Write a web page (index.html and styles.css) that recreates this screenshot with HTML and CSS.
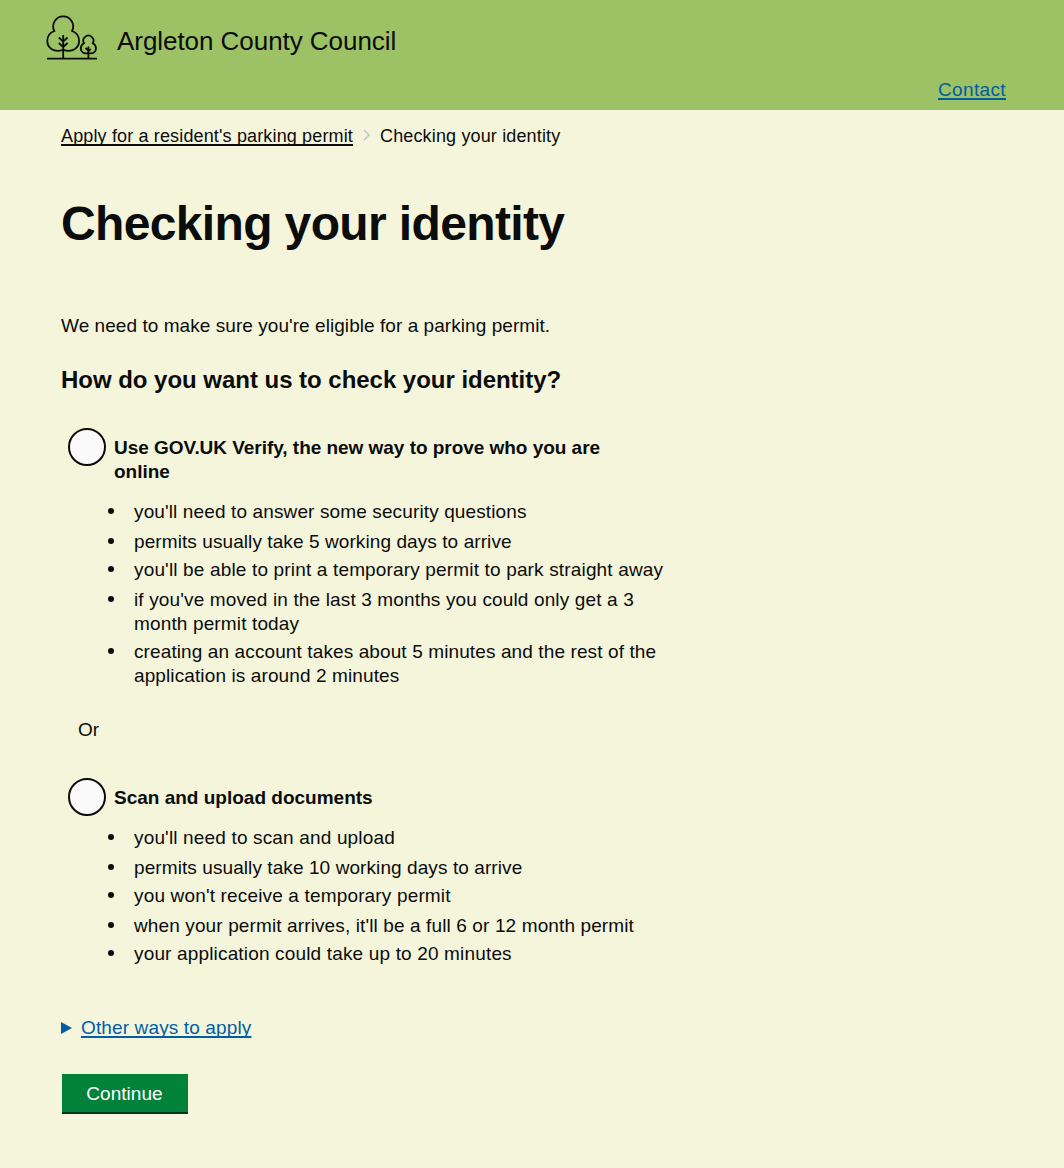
FILE: index.html
```html
<!DOCTYPE html>
<html lang="en">
<head>
<meta charset="utf-8">
<title>Checking your identity</title>
<link rel="stylesheet" href="styles.css">
</head>
<body>
<header class="header">
  <div class="brand">
    <svg class="logo" width="52" height="46" viewBox="0 0 52 46" fill="none" stroke="#0b0c0c" stroke-width="1.8" aria-hidden="true">
      <path d="M1 43.700H51M17.200 43.700V20M12.800 22.500L17.200 26.500L21.600 22.500M12.800 28L17.200 32L21.600 28"/>
      <path d="M17.200 34.800C8 38 1.300 33 1.300 26C1.300 21 4 17.500 8.300 16A10 10 0 1 1 26.100 16C30.400 17.500 33.100 21 33.100 26C33.100 33 26.400 38 17.200 34.800Z"/>
      <path d="M42.400 43.700V31.500M39.500 33L42.400 35.500M42.400 36.500L44.800 34"/>
      <path d="M42.400 37.800C38 39.500 34.800 37 34.800 33.500C34.800 31 36.200 29.200 38 28.300A5.100 5.100 0 1 1 46.800 28.300C48.600 29.200 50 31 50 33.500C50 37 46.800 39.500 42.400 37.800Z"/>
    </svg>
    <span class="brand-name">Argleton County Council</span>
  </div>
  <nav class="nav"><a class="link contact" href="#">Contact</a></nav>
</header>
<main class="main">
  <nav class="crumbs">
    <a class="crumb-link" href="#">Apply for a resident's parking permit</a>
    <svg class="chevron" width="7" height="12" viewBox="0 0 7 12" fill="none" stroke="#bfc1c3" stroke-width="1.400" aria-hidden="true"><path d="M1 1L6 6L1 11"/></svg>
    <span>Checking your identity</span>
  </nav>
  <h1 class="title">Checking your identity</h1>
  <p class="intro">We need to make sure you're eligible for a parking permit.</p>
  <h2 class="question">How do you want us to check your identity?</h2>
  <section class="option">
    <label class="choice"><input class="radio" type="radio" name="method"><span class="choice-text">Use GOV.UK Verify, the new way to prove who you are<br>online</span></label>
    <ul class="facts facts-verify">
      <li>you'll need to answer some security questions</li>
      <li>permits usually take 5 working days to arrive</li>
      <li>you'll be able to print a temporary permit to park straight away</li>
      <li>if you've moved in the last 3 months you could only get a 3<br>month permit today</li>
      <li>creating an account takes about 5 minutes and the rest of the<br>application is around 2 minutes</li>
    </ul>
  </section>
  <p class="or">Or</p>
  <section class="option">
    <label class="choice"><input class="radio" type="radio" name="method"><span class="choice-text choice-scan">Scan and upload documents</span></label>
    <ul class="facts">
      <li>you'll need to scan and upload</li>
      <li>permits usually take 10 working days to arrive</li>
      <li>you won't receive a temporary permit</li>
      <li>when your permit arrives, it'll be a full 6 or 12 month permit</li>
      <li>your application could take up to 20 minutes</li>
    </ul>
  </section>
  <div class="other"><svg width="11" height="12" viewBox="0 0 11 12" fill="#005ea5" aria-hidden="true"><path d="M0 0L11 6L0 12Z"/></svg><a class="link other-link" href="#">Other ways to apply</a></div>
  <button class="continue" type="button">Continue</button>
</main>
</body>
</html>
```
FILE: styles.css
```css
* { box-sizing: border-box; }
body {
  margin: 0;
  min-height: 1168px;
  background: #f5f5dc;
  color: #0b0c0c;
  font: 19px/24px "Liberation Sans", Arial, sans-serif;
}
h1, h2, p, ul { margin: 0; padding: 0; }
.header { height: 110px; padding: 15px 58px 0 46px; background: #9dc165; }
.brand { display: flex; gap: 19px; height: 63px; }
.logo { flex: none; }
.brand-name { font-size: 26px; line-height: 52px; letter-spacing: -0.05px; }
.nav { display: flex; justify-content: flex-end; }
.link, .crumb-link {
  color: #005ea5;
  text-decoration: underline 2px;
  text-underline-offset: 2px;
  text-decoration-skip-ink: none;
}
.contact { letter-spacing: 0.36px; }
.main { padding: 14px 61px 0; }
.crumbs { display: flex; align-items: center; height: 24px; font-size: 18px; letter-spacing: 0.147px; }
.crumb-link { color: inherit; }
.chevron { margin: 0 10px 2px; }
.title { margin-top: 51px; font-size: 48px; line-height: 50px; letter-spacing: -0.64px; }
.intro { margin-top: 65px; letter-spacing: 0.055px; }
.question { margin-top: 27px; font-size: 24px; line-height: 30px; letter-spacing: -0.03px; }
.option { padding-left: 7px; }
.question + .option { margin-top: 33px; }
.choice { display: flex; gap: 8px; }
.radio { appearance: none; flex: none; width: 38px; height: 38px; margin: 0; border: 2px solid #0b0c0c; border-radius: 50%; background: #fafafa; }
.choice-text { padding-top: 8px; font-weight: 700; letter-spacing: -0.035px; }
.choice-scan { letter-spacing: 0; }
.facts { margin-top: 10px; padding-left: 66px; list-style: none; letter-spacing: 0.16px; }
.facts-verify { margin-top: 16px; letter-spacing: 0.125px; }
.facts li { margin-bottom: 6px; }
.facts li:nth-child(even) { margin-bottom: 4px; }
.facts li:nth-child(2) { letter-spacing: 0.085px; }
.facts li:nth-child(4) { letter-spacing: 0.12px; }
.facts-verify li:nth-child(3) { letter-spacing: 0.16px; }
.facts-verify li:nth-child(4) { letter-spacing: 0.14px; }
.facts-verify li:nth-child(5) { letter-spacing: 0.11px; }
.facts li::before { content: ""; float: left; width: 6px; height: 6px; margin: 8px 0 0 -26px; border-radius: 50%; background: #0b0c0c; }
.or { margin: 30px 0 36px; padding-left: 17px; }
.other { display: flex; align-items: center; gap: 9px; margin-top: 50px; }
.other-link { letter-spacing: 0.13px; }
.continue { display: block; width: 126px; height: 40px; margin: 34px 0 0 1px; padding: 2px 1px 0 0; border: 0; border-bottom: 2px solid #003618; background: #00823b; color: #fff; font: inherit; letter-spacing: 0.05px; }
```
